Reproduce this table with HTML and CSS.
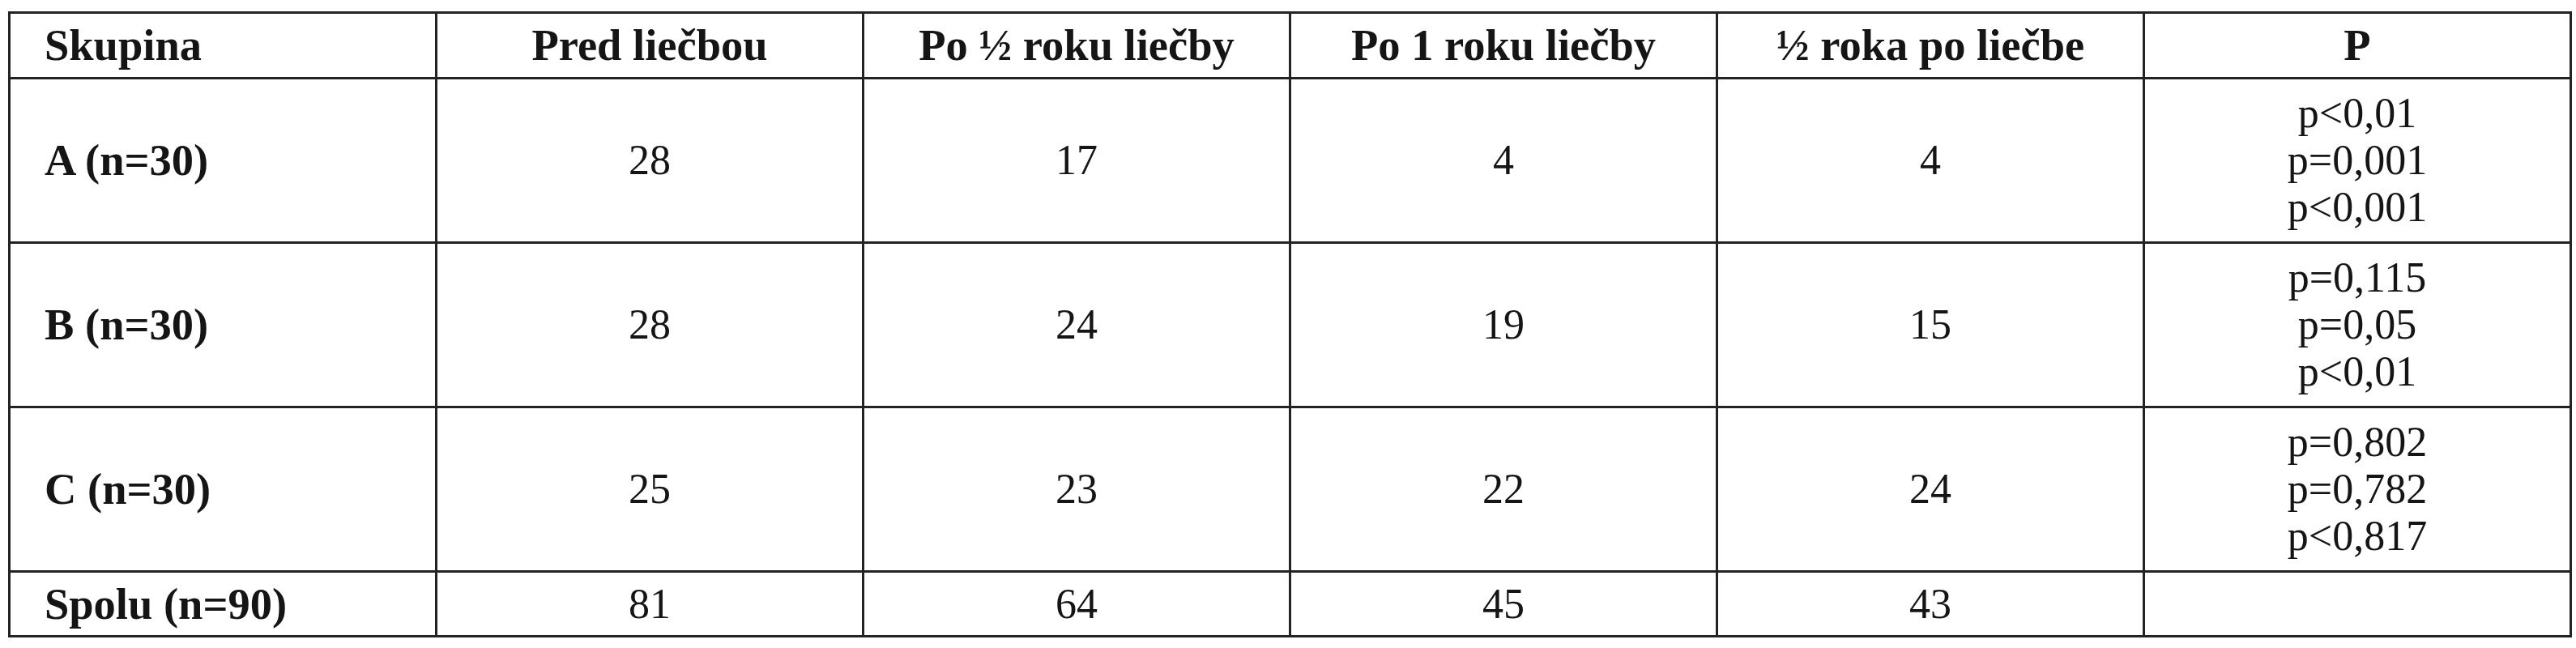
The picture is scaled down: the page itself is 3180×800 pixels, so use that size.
FILE: index.html
```html
<!DOCTYPE html>
<html lang="sk">
<head>
<meta charset="utf-8">
<title>Skupina</title>
<link rel="stylesheet" href="styles.css">
</head>
<body>
<table class="data">
  <colgroup>
    <col class="c"><col class="c"><col class="c"><col class="c"><col class="c"><col class="c">
  </colgroup>
  <thead>
    <tr class="head">
      <th class="first">Skupina</th>
      <th>Pred liečbou</th>
      <th>Po ½ roku liečby</th>
      <th>Po 1 roku liečby</th>
      <th>½ roka po liečbe</th>
      <th>P</th>
    </tr>
  </thead>
  <tbody>
    <tr class="tall">
      <td class="first">A (n=30)</td>
      <td>28</td><td>17</td><td>4</td><td>4</td>
      <td class="p">p&lt;0,01<br>p=0,001<br>p&lt;0,001</td>
    </tr>
    <tr class="tall">
      <td class="first">B (n=30)</td>
      <td>28</td><td>24</td><td>19</td><td>15</td>
      <td class="p">p=0,115<br>p=0,05<br>p&lt;0,01</td>
    </tr>
    <tr class="tall">
      <td class="first">C (n=30)</td>
      <td>25</td><td>23</td><td>22</td><td>24</td>
      <td class="p">p=0,802<br>p=0,782<br>p&lt;0,817</td>
    </tr>
    <tr class="short">
      <td class="first">Spolu (n=90)</td>
      <td>81</td><td>64</td><td>45</td><td>43</td>
      <td class="p"></td>
    </tr>
  </tbody>
</table>
</body>
</html>
```

FILE: styles.css
```css
html, body {
  margin: 0;
  padding: 0;
  background: #ffffff;
}

body {
  padding: 14px 0 0 10px;
  font-family: "Liberation Serif", "Times New Roman", serif;
  color: #151515;
}

.data {
  border-collapse: collapse;
  table-layout: fixed;
  width: 3162px;
}

.data .c {
  width: 527px;
}

.data th,
.data td {
  border: 3px solid #232323;
  text-align: center;
  vertical-align: middle;
  padding: 0;
  font-size: 52px;
  line-height: 58px;
}

.data th {
  font-weight: bold;
  font-size: 54.5px;
}

.data .first {
  text-align: left;
  padding-left: 42px;
  font-weight: bold;
  font-size: 54.5px;
}

.head {
  height: 81px;
}

.tall {
  height: 203px;
}

.short {
  height: 80px;
}
```
